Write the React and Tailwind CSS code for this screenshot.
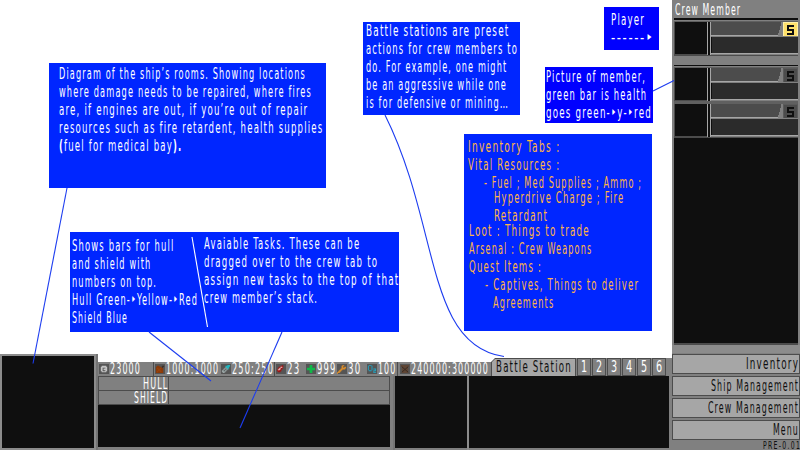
import { useLayoutEffect, useRef, useState } from "react";

// One line of condensed text, squeezed horizontally to the given width.
function Line({ w, className = "", children }) {
  const ref = useRef(null);
  const [scale, setScale] = useState(0.6);
  useLayoutEffect(() => {
    setScale(w / (ref.current.offsetWidth - 2));
  }, [w]);
  return (
    <div className={"h-[18px] shrink-0 " + className} style={{ width: w }}>
      <span
        ref={ref}
        className="inline-block origin-left whitespace-pre align-top tracking-[2px]"
        style={{ transform: `scaleX(${scale})` }}
      >
        {children}
      </span>
    </div>
  );
}

function Note({ className, lines }) {
  return (
    <div className={"absolute flex flex-col text-white " + className}>
      {lines.map(([text, w, cls], i) => (
        <Line key={i} w={w} className={cls}>
          {text}
        </Line>
      ))}
    </div>
  );
}

function CrewCard({ active }) {
  return (
    <div className="flex h-[34px] w-[124px] shrink-0 border-t border-[#606060] bg-[#0f0f0f]">
      <div className="w-[33px] border-b border-l border-[#4c4c4c]" />
      <div className="w-px bg-[#a6a6a6]" />
      <div className="w-[2px]" />
      <div className="w-px bg-[#a6a6a6]" />
      <div className="flex flex-1 flex-col">
        <div className="flex h-[14px] shrink-0 border-b border-[#a6a6a6] bg-[#4c4c4c]">
          <div className="flex-1" />
          <svg width="5" height="14" viewBox="0 0 5 14" shapeRendering="crispEdges">
            <path d="M0 14V11H1V8H2V4H3V0H5V14Z" fill="#808080" />
          </svg>
          <div
            className={
              "flex h-[15px] w-[15px] items-center justify-center border " +
              (active ? "border-[#fff0a8] bg-[#ffe16b]" : "border-[#5a5a5a] bg-[#4c4c4c]")
            }
          >
            <svg
              className="shrink-0"
              width="7"
              height="10"
              viewBox="0 0 7 10"
              shapeRendering="crispEdges"
            >
              <path d="M0 0H7V2H2V4H7V10H0V8H5V6H0Z" fill="#0f0f0f" />
            </svg>
          </div>
        </div>
        <div className="h-px shrink-0 bg-[#808080]" />
        <div className="h-[16px] shrink-0 border-l border-[#0f0f0f] bg-[#2b2b2b]" />
        <div className="h-px shrink-0 bg-[#a6a6a6]" />
        <div className="h-px shrink-0 bg-[#808080]" />
      </div>
    </div>
  );
}

const icons = {
  coin: (
    <>
      <path d="M3 2H8V3H9V8H8V9H3V8H2V3H3Z" fill="#c4c4c4" />
      <path d="M4 4H7V5H5V7H7V8H4Z" fill="#555" />
    </>
  ),
  fuel: (
    <>
      <path d="M1 3H2V2H5V3H7V4H9V10H1Z" fill="#8a3a08" />
      <path d="M2 4H3V5H4V6H5V5H6V4H7V5H6V6H5V7H6V8H7V9H6V8H5V7H4V8H3V9H2V8H3V7H4V6H3V5H2Z" fill="#a34a12" />
      <path d="M7 3H8V2H10V3H9V4H8Z" fill="#3a2a20" />
    </>
  ),
  ammo: (
    <>
      <path d="M1 7H2V6H3V5H4V4H5V3H7V4H8V6H7V7H6V8H5V9H4V10H2V9H1Z" fill="#9aa5a5" />
      <path d="M3 7H4V6H5V5H6V6H5V7H4V8H3Z" fill="#303838" />
      <path d="M5 2H7V1H10V3H9V5H8V6H7V4H5Z" fill="#1fb5bd" />
    </>
  ),
  pill: (
    <>
      <path d="M1 6H2V4H3V3H5V2H7V1H8V5H7V6H6V8H5V9H2V8H1Z" fill="#9c1414" />
      <path d="M2 6H3V5H4V4H5V3H7V4H5V6H4V7H2Z" fill="#f2dada" />
    </>
  ),
  plus: <path d="M4 1H7V4H10V7H7V10H4V7H1V4H4Z" fill="#0fb848" />,
  wrench: (
    <path d="M0 9H1V8H2V7H3V6H4V5H5V2H6V1H8V2H7V4H8V3H10V5H9V6H6V7H5V8H4V9H3V10H1V11H0Z" fill="#d98c2b" />
  ),
  oxygen: (
    <>
      <path d="M2 1H5V2H2ZM1 2H2V7H1ZM5 2H6V7H5ZM2 7H5V8H2Z" fill="#20a5c5" />
      <path d="M7 5H10V8H8V9H10V10H7V7H9V6H7Z" fill="#20a5c5" />
    </>
  ),
  crate: (
    <>
      <path d="M1 1H10V3H9V10H2V3H1Z" fill="#5f4635" />
      <path d="M2 3L9 9M9 3L2 9" stroke="#352820" />
    </>
  ),
};

function Resource({ icon, w, children, className = "" }) {
  return (
    <div className={"flex shrink-0 items-start " + className}>
      <svg
        className="mr-px mt-[2px] bg-[#555555]"
        width="10"
        height="10"
        viewBox="0 0 11 11"
      >
        {icons[icon]}
      </svg>
      <Line w={w} className="-mt-[2px]">
        {children}
      </Line>
    </div>
  );
}

function Divider() {
  return <div className="h-[14px] w-px shrink-0 bg-[#4c4c4c]" />;
}

function StatRow({ label, w }) {
  return (
    <div className="flex h-[14px] border-b border-[#4c4c4c] leading-[14px]">
      <div className="flex w-[71px] justify-end border-l border-r border-[#4c4c4c] pr-px">
        <Line w={w} className="h-[13px]!">
          {label}
        </Line>
      </div>
      <div className="flex-1 border-r border-[#4c4c4c]" />
    </div>
  );
}

function MenuButton({ w, children }) {
  return (
    <div className="mb-[2px] flex h-5 shrink-0 justify-end border border-[#4c4c4c] bg-[#a6a6a6] pr-px text-[#0f0f0f]">
      <Line w={w}>{children}</Line>
    </div>
  );
}

export default function App() {
  return (
    <div className="relative flex h-[450px] w-[800px] overflow-hidden bg-white font-['DejaVu_Sans_Condensed','DejaVu_Sans',sans-serif] text-[16px] leading-[18px] text-white">
      <main className="flex w-[672px] items-end">
        <section className="flex h-[96px] w-[98px] border-2 border-r-0 border-[#8c8c8c] bg-[#0f0f0f]">
          <div className="flex-1" />
          <div className="-my-[2px] w-[2px] bg-[#8c8c8c]" />
          <div className="-my-[2px] w-[2px] bg-[#747474]" />
        </section>

        <section className="flex h-[92px] w-[574px] flex-col">
          <div className="flex h-[18px] items-end">
            <div className="flex h-[14px] w-[393px] bg-[#808080]">
              <Resource icon="coin" w={30} className="ml-px">23000</Resource>
              <div className="ml-[13px]"><Divider /></div>
              <Resource icon="fuel" w={52} className="ml-px">1000:1000</Resource>
              <Resource icon="ammo" w={41} className="ml-[3px]">250:250</Resource>
              <div className="ml-px"><Divider /></div>
              <Resource icon="pill" w={12} className="ml-px">23</Resource>
              <Resource icon="plus" w={18} className="ml-[7px]">999</Resource>
              <Resource icon="wrench" w={12} className="ml-[2px]">30</Resource>
              <Resource icon="oxygen" w={17} className="ml-[7px]">100</Resource>
              <div className="ml-[2px]"><Divider /></div>
              <Resource icon="crate" w={77} className="ml-[2px]">240000:300000</Resource>
            </div>
            <div className="flex h-[18px] w-[85px] bg-[#4c4c4c] pr-px [clip-path:polygon(4px_0,100%_0,100%_100%,0_100%,0_4px)]">
              <div className="mt-px flex-1 bg-[#a6a6a6] pl-[5px] text-[#0f0f0f] [clip-path:polygon(4px_0,100%_0,100%_100%,1px_100%,1px_3px)]">
                <Line w={75} className="-mt-px">Battle Station</Line>
              </div>
            </div>
            <div className="flex h-[18px] flex-1 gap-px bg-[#808080] pl-px">
              {[1, 2, 3, 4, 5, 6].map((n) => (
                <div
                  key={n}
                  className="flex h-[18px] w-[14px] justify-center border border-[#4c4c4c]"
                >
                  <Line w={6} className="-mt-px">{n}</Line>
                </div>
              ))}
            </div>
          </div>

          <div className="flex h-[74px] bg-[#808080]">
            <div className="flex w-[292px] flex-col">
              <div className="h-px bg-[#4c4c4c]" />
              <StatRow label="HULL" w={24} />
              <StatRow label="SHIELD" w={33} />
              <div className="h-[42px] bg-[#0f0f0f]" />
            </div>
            <div className="w-[3px] bg-[#808080]" />
            <div className="w-[2px] bg-[#747474]" />
            <div className="h-[72px] w-[72px] bg-[#0f0f0f]" />
            <div className="w-[2px] bg-[#8c8c8c]" />
            <div className="h-[72px] w-[200px] bg-[#0f0f0f]" />
          </div>
        </section>
      </main>

      <aside className="flex w-[128px] flex-col bg-[#808080]">
        <div className="h-[18px] shrink-0 pl-[3px] pt-px">
          <Line w={65}>Crew Member</Line>
        </div>
        <div className="mx-[2px] flex h-[327px] shrink-0 flex-col bg-[#0f0f0f]">
          <div className="mt-[2px] h-px shrink-0 bg-[#808080]" />
          <CrewCard active />
          <div className="flex h-[12px] shrink-0 flex-col bg-[#808080]">
            <div className="h-px bg-[#4c4c4c]" />
            <div className="h-[9px]" />
            <div className="h-px bg-[#0f0f0f]" />
          </div>
          <CrewCard />
          <div className="h-[2px] shrink-0 bg-[#606060]" />
          <CrewCard />
          <div className="h-px bg-[#4c4c4c]" />
          <div className="flex-1 border-b-2 border-[#4c4c4c]" />
        </div>
        <div className="mb-px h-[8px] shrink-0 bg-[#8c8c8c]" />
        <MenuButton w={52}>Inventory</MenuButton>
        <MenuButton w={87}>Ship Management</MenuButton>
        <MenuButton w={90}>Crew Management</MenuButton>
        <MenuButton w={25}>Menu</MenuButton>
        <div className="-mt-[2px] flex shrink-0 justify-end text-[10.5px] leading-[10px] text-[#0f0f0f]">
          <Line w={37} className="h-[10px]!">PRE-0.01</Line>
        </div>
      </aside>

      <Note
        className="left-[49px] top-[63px] h-[125px] w-[277px] bg-[#0026ff] pl-[10px] pt-[2px]"
        lines={[
          ["Diagram of the ship’s rooms. Showing locations", 246],
          ["where damage needs to be repaired, where fires", 252],
          ["are, if engines are out, if you’re out of repair", 248],
          ["resources such as fire retardent, health supplies", 263],
          [<><b>(</b>fuel for medical bay<b>).</b></>, 122],
        ]}
      />
      <div className="absolute left-[70px] top-[232px] h-[100px] w-[329px] bg-[#0026ff]" />
      <Note
        className="left-[72px] top-[237px]"
        lines={[
          ["Shows bars for hull", 101],
          ["and shield with", 78],
          ["numbers on top.", 84],
          ["Hull Green-‣Yellow-‣Red", 125],
          ["Shield Blue", 55],
        ]}
      />
      <Note
        className="left-[204px] top-[235px]"
        lines={[
          ["Avaiable Tasks. These can be", 155],
          ["dragged over to the crew tab to", 173],
          ["assign new tasks to the top of that", 194],
          ["crew member’s stack.", 113],
        ]}
      />
      <Note
        className="left-[363px] top-[22px] h-[93px] w-[157px] bg-[#0026ff] pl-[3px]"
        lines={[
          ["Battle stations are preset", 142],
          ["actions for crew members to", 151],
          ["do. For example, one might", 140],
          ["be an aggressive while one", 140],
          ["is for defensive or mining…", 142],
        ]}
      />
      <Note
        className="left-[604px] top-[7px] h-[43px] w-[55px] bg-[#0000ff] pl-[7px] pt-[4px]"
        lines={[
          ["Player", 33],
          ["------‣", 42],
        ]}
      />
      <Note
        className="left-[545px] top-[67px] h-[56px] w-[108px] bg-[#0000ff] pl-[1px] pt-px"
        lines={[
          ["Picture of member,", 99],
          ["green bar is health", 100],
          ["goes green-‣y-‣red", 105],
        ]}
      />
      <Note
        className="left-[464px] top-[134px] h-[197px] w-[188px] bg-[#0026ff] pl-[4px] pt-[4px] text-[#ffb545]!"
        lines={[
          ["Inventory Tabs :", 91],
          ["Vital Resources :", 91],
          ["- Fuel ; Med Supplies ; Ammo ;", 157, "ml-[16px]"],
          ["Hyperdrive Charge ; Fire", 129, "ml-[26px] -mt-[3px]"],
          ["Retardant", 53, "ml-[26px]"],
          ["Loot : Things to trade", 120, "ml-px -mt-[3px]"],
          ["Arsenal : Crew Weapons", 122, "ml-px"],
          ["Quest Items :", 72, "ml-px"],
          ["- Captives, Things to deliver", 153, "ml-[17px]"],
          ["Agreements", 60, "ml-[25px]"],
        ]}
      />

      <svg className="absolute inset-0" width="800" height="450" fill="none" stroke="#1c3cf0" strokeWidth="1.1">
        <path d="M67 188L33 363.500" />
        <path d="M149 332L211 381" />
        <path d="M282 332L240 428" />
        <path d="M385 115C440 225 425 345 504 356.500" />
        <path d="M653 91L674 80.500" />
        <path d="M192 237L207.500 327" stroke="#fff" />
      </svg>
    </div>
  );
}
